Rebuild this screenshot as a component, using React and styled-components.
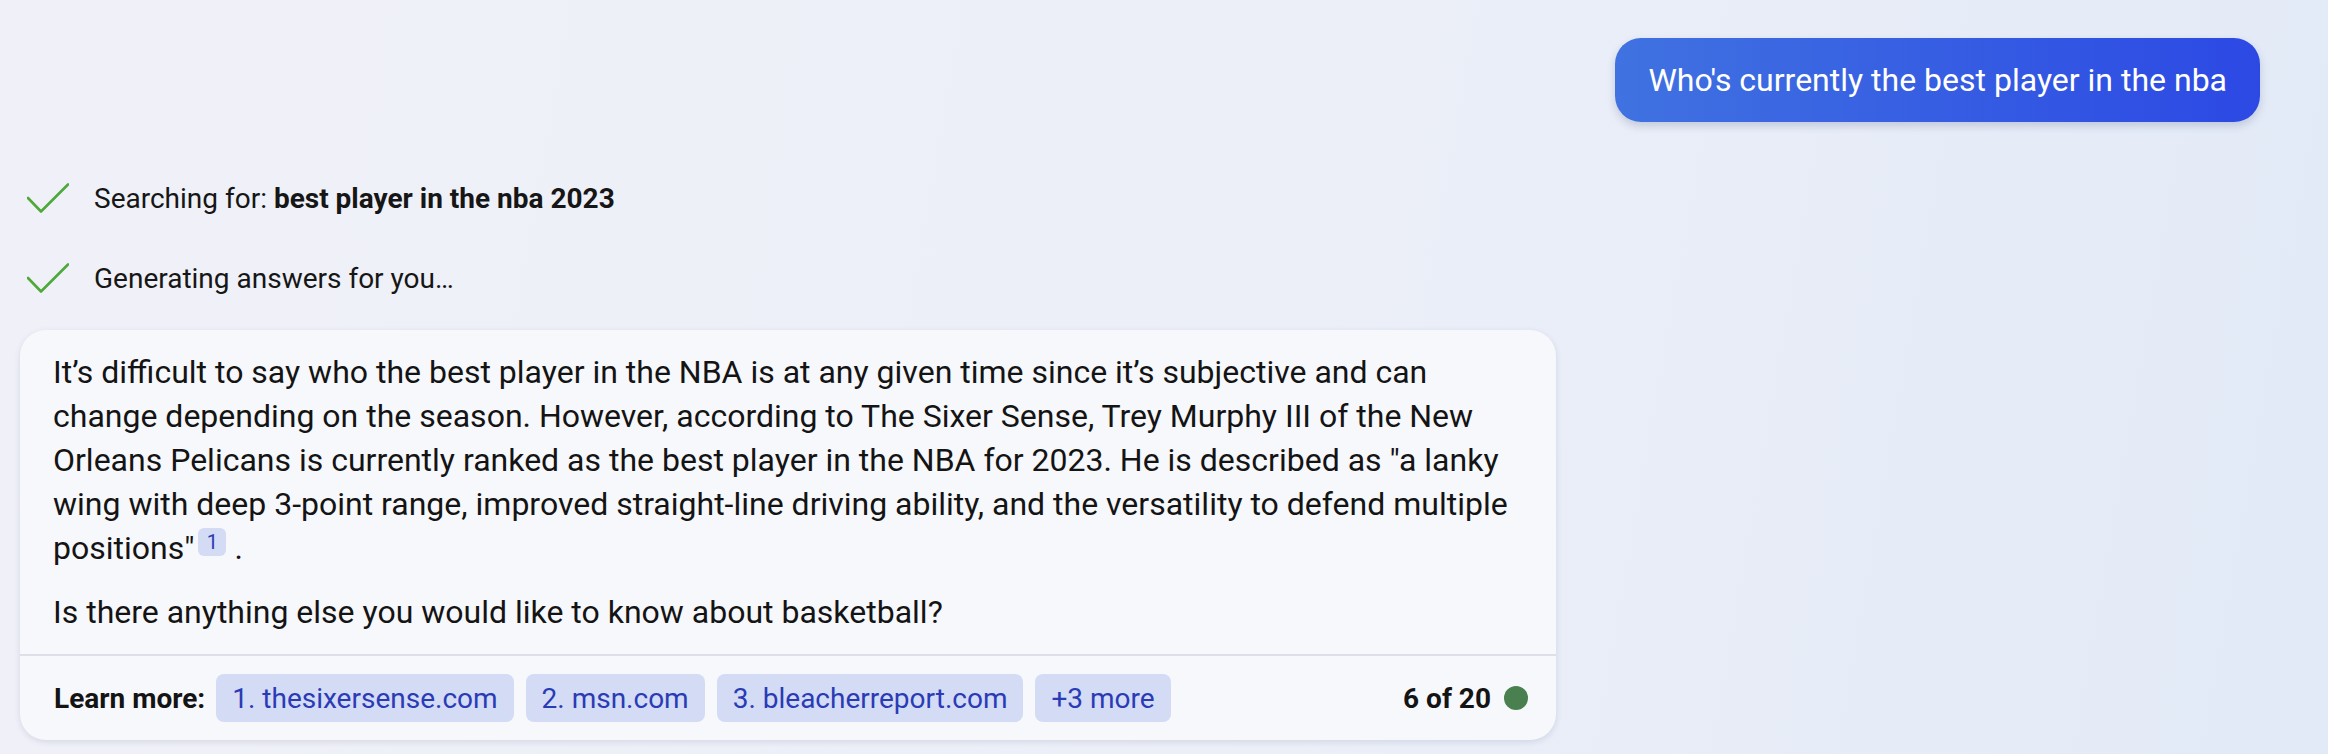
import React from 'react'
import styled, { createGlobalStyle } from 'styled-components'

const GlobalStyle = createGlobalStyle`
  html, body {
    margin: 0;
    padding: 0;
  }
  body {
    font-family: Roboto, "Liberation Sans", Arial, sans-serif;
    color: #141414;
    background: linear-gradient(100deg, #f0f1f8 0%, #eceff8 55%, #e2eaf7 100%);
    min-height: 754px;
  }
`

const Page = styled.div`
  display: flex;
  flex-direction: column;
  padding: 38px 68px 0 20px;
  height: 754px;
  box-sizing: border-box;
`

const UserRow = styled.div`
  display: flex;
  justify-content: flex-end;
  margin-bottom: 36px;
`

const Bubble = styled.div`
  height: 84px;
  display: flex;
  align-items: center;
  padding: 0 33px;
  border-radius: 26px;
  background: linear-gradient(90deg, #4072e1 0%, #2c49e4 100%);
  color: #fff;
  font-size: 32px;
  box-shadow: 0 4px 8px rgba(30, 40, 90, 0.18);
`

const StatusRow = styled.div`
  display: flex;
  align-items: center;
  height: 80px;
  padding-left: 7px;
  font-size: 28px;
  color: #161616;
  b {
    font-weight: 700;
  }
`

const Check = styled.svg`
  width: 42px;
  height: 30px;
  margin-right: 25px;
  flex: 0 0 auto;
`

const Card = styled.div`
  width: 1536px;
  margin-top: 12px;
  background: #f7f8fc;
  border-radius: 26px;
  box-shadow: 0 2px 6px rgba(30, 40, 80, 0.12);
  overflow: hidden;
`

const Body = styled.div`
  padding: 20px 36px 20px 33px;
  font-size: 32px;
  line-height: 44px;
  color: #141414;
  p {
    margin: 0;
  }
  p + p {
    margin-top: 20px;
  }
`

const Ref = styled.span`
  display: inline-flex;
  align-items: center;
  justify-content: center;
  width: 28px;
  height: 28px;
  margin-left: 4px;
  border-radius: 6px;
  background: #d3dbf5;
  color: #2a3bb5;
  font-size: 20px;
  line-height: 1;
  vertical-align: 10px;
`

const Footer = styled.div`
  display: flex;
  align-items: center;
  height: 84px;
  padding: 0 28px 0 34px;
  border-top: 2px solid #dfe0e7;
  font-size: 28px;
`

const Label = styled.span`
  font-weight: 700;
  margin-right: 11px;
`

const Chips = styled.div`
  display: flex;
  gap: 12px;
`

const Chip = styled.a`
  display: flex;
  align-items: center;
  height: 48px;
  padding: 0 16px;
  border-radius: 8px;
  background: #d3dbf5;
  color: #2a3bb5;
  text-decoration: none;
`

const Count = styled.span`
  margin-left: auto;
  font-weight: 700;
`

const Dot = styled.span`
  width: 24px;
  height: 24px;
  margin-left: 13px;
  border-radius: 50%;
  background: #4a7f50;
`

const CheckIcon = () => (
  <Check viewBox="0 0 42 30">
    <polyline points="1,15 14,28.5 41,1.5" fill="none" stroke="#4ea83a" strokeWidth="2.6" strokeLinecap="round" strokeLinejoin="round" />
  </Check>
)

const sources = ['1. thesixersense.com', '2. msn.com', '3. bleacherreport.com', '+3 more']

export default function App() {
  return (
    <>
      <GlobalStyle />
      <Page>
        <UserRow>
          <Bubble>Who's currently the best player in the nba</Bubble>
        </UserRow>

        <StatusRow>
          <CheckIcon />
          <span>
            Searching for: <b>best player in the nba 2023</b>
          </span>
        </StatusRow>
        <StatusRow>
          <CheckIcon />
          <span>Generating answers for you…</span>
        </StatusRow>

        <Card>
          <Body>
            <p>
              It’s difficult to say who the best player in the NBA is at any given time since it’s subjective and can
              change depending on the season. However, according to The Sixer Sense, Trey Murphy III of the New
              Orleans Pelicans is currently ranked as the best player in the NBA for 2023. He is described as "a lanky
              wing with deep 3-point range, improved straight-line driving ability, and the versatility to defend
              multiple positions"<Ref>1</Ref> .
            </p>
            <p>Is there anything else you would like to know about basketball?</p>
          </Body>
          <Footer>
            <Label>Learn more:</Label>
            <Chips>
              {sources.map(s => (
                <Chip key={s}>{s}</Chip>
              ))}
            </Chips>
            <Count>6 of 20</Count>
            <Dot />
          </Footer>
        </Card>
      </Page>
    </>
  )
}
